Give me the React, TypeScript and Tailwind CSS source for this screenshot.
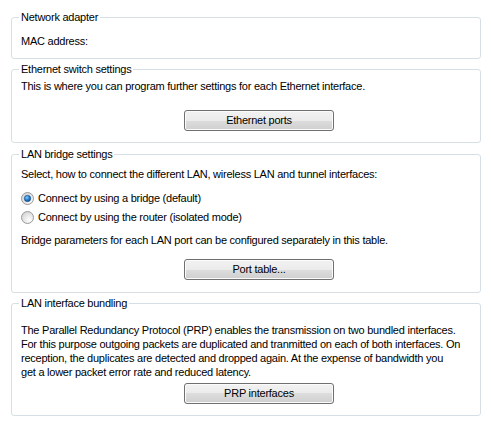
import type { ReactNode } from 'react';

/**
 * Interface settings page
 * Group boxes in the classic Windows dialog look
 */

function GroupBox({ title, className, children }: { title: string; className?: string; children: ReactNode }) {
  return (
    <fieldset className={`rounded-[3px] border border-[#d5dfe5] px-[7px] ${className ?? ''}`}>
      <legend className="px-[2px] leading-[13px]">{title}</legend>
      <div className="pl-[2px]">{children}</div>
    </fieldset>
  );
}

function Button({ label, className }: { label: string; className?: string }) {
  return (
    <button
      className={`flex h-[21px] w-[150px] items-center justify-center rounded-[3px] border border-[#707070] bg-[linear-gradient(to_bottom,#f2f2f2_0%,#ebebeb_50%,#dddddd_50%,#cfcfcf_100%)] leading-[13px] text-black shadow-[inset_0_0_0_1px_#fbfbfb] ${className ?? ''}`}
    >
      {label}
    </button>
  );
}

function Radio({ checked, label }: { checked?: boolean; label: string }) {
  return (
    <label className="flex h-[19px] items-center gap-[4px]">
      <svg width="13" height="13" viewBox="0 0 13 13">
        <defs>
          <radialGradient id={checked ? 'rg-on' : 'rg-off'} cx="0.65" cy="0.7" r="0.7">
            <stop offset="0" stopColor="#ffffff" />
            <stop offset="1" stopColor="#d6d6d6" />
          </radialGradient>
          <radialGradient id="dot" cx="0.4" cy="0.35" r="0.7">
            <stop offset="0" stopColor="#7fd0ff" />
            <stop offset="0.6" stopColor="#1f74c7" />
            <stop offset="1" stopColor="#0b4a8c" />
          </radialGradient>
        </defs>
        <circle cx="6.5" cy="6.5" r="6" fill={`url(#${checked ? 'rg-on' : 'rg-off'})`} stroke="#9a9a9a" />
        {checked && <circle cx="6.5" cy="6.5" r="3.2" fill="url(#dot)" stroke="#1a4f86" strokeWidth="0.6" />}
      </svg>
      <span>{label}</span>
    </label>
  );
}

export default function App() {
  return (
    <div className="min-h-[428px] w-[491px] bg-white pl-[11px] pr-[10px] pt-[11px] font-['Liberation_Sans',Arial,sans-serif] text-[11px] leading-[13px] tracking-[-0.24px] text-black">
      {/* Network adapter */}
      <GroupBox title="Network adapter" className="pb-[10px]">
        <div className="mt-[11px]">MAC address:</div>
      </GroupBox>

      {/* Ethernet switch */}
      <GroupBox title="Ethernet switch settings" className="mt-[4px] pb-[11px]">
        <div className="mt-[4px]">This is where you can program further settings for each Ethernet interface.</div>
        <Button label="Ethernet ports" className="ml-[163px] mt-[17px]" />
      </GroupBox>

      {/* LAN bridge */}
      <GroupBox title="LAN bridge settings" className="mt-[5px] pb-[12px]">
        <div className="mt-[7px]">Select, how to connect the different LAN, wireless LAN and tunnel interfaces:</div>
        <div className="mt-[8px] flex flex-col">
          <Radio checked label="Connect by using a bridge (default)" />
          <Radio label="Connect by using the router (isolated mode)" />
        </div>
        <div className="mt-[7px]">Bridge parameters for each LAN port can be configured separately in this table.</div>
        <Button label="Port table..." className="ml-[163px] mt-[12px]" />
      </GroupBox>

      {/* LAN interface bundling */}
      <GroupBox title="LAN interface bundling" className="mt-[4px] pb-[11px]">
        <p className="mt-[13px] whitespace-nowrap leading-[14px]">
          The Parallel Redundancy Protocol (PRP) enables the transmission on two bundled interfaces.
          <br />
          For this purpose outgoing packets are duplicated and tranmitted on each of both interfaces. On
          <br />
          reception, the duplicates are detected and dropped again. At the expense of bandwidth you
          <br />
          get a lower packet error rate and reduced latency.
        </p>
        <Button label="PRP interfaces" className="ml-[163px] mt-[4px]" />
      </GroupBox>
    </div>
  );
}
